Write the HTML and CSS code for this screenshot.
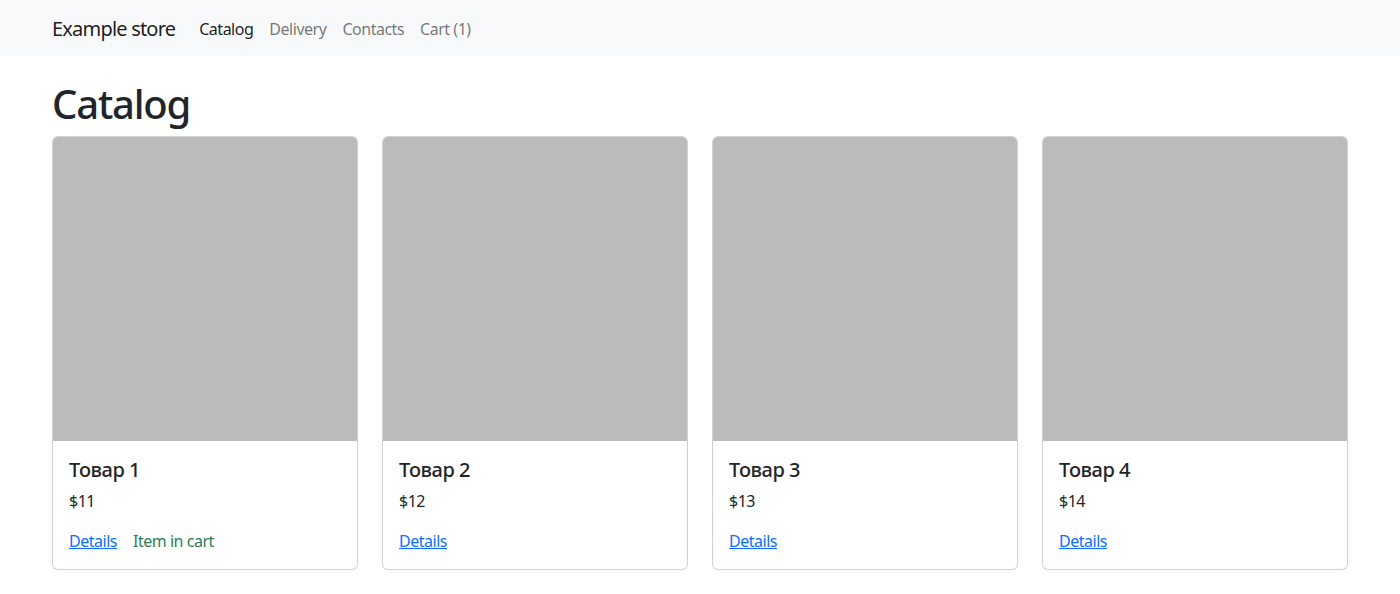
FILE: index.html
```html
<!DOCTYPE html>
<html lang="en">
<head>
<meta charset="utf-8">
<title>Example store</title>
<link rel="stylesheet" href="styles.css">
</head>
<body>
<nav class="navbar">
  <div class="container nav-inner">
    <a class="brand" href="#">Example store</a>
    <ul class="nav">
      <li><a class="nav-link active" href="#">Catalog</a></li>
      <li><a class="nav-link" href="#">Delivery</a></li>
      <li><a class="nav-link" href="#">Contacts</a></li>
      <li><a class="nav-link" href="#">Cart (1)</a></li>
    </ul>
  </div>
</nav>
<main class="container">
  <h1 class="title">Catalog</h1>
  <div class="grid">
    <div class="card">
      <div class="card-img"></div>
      <div class="card-body">
        <h5 class="card-title">Товар 1</h5>
        <p class="price">$11</p>
        <div class="actions"><a href="#" class="link">Details</a><span class="in-cart">Item in cart</span></div>
      </div>
    </div>
    <div class="card">
      <div class="card-img"></div>
      <div class="card-body">
        <h5 class="card-title">Товар 2</h5>
        <p class="price">$12</p>
        <div class="actions"><a href="#" class="link">Details</a></div>
      </div>
    </div>
    <div class="card">
      <div class="card-img"></div>
      <div class="card-body">
        <h5 class="card-title">Товар 3</h5>
        <p class="price">$13</p>
        <div class="actions"><a href="#" class="link">Details</a></div>
      </div>
    </div>
    <div class="card">
      <div class="card-img"></div>
      <div class="card-body">
        <h5 class="card-title">Товар 4</h5>
        <p class="price">$14</p>
        <div class="actions"><a href="#" class="link">Details</a></div>
      </div>
    </div>
  </div>
</main>
</body>
</html>
```

FILE: styles.css
```css
* { box-sizing: border-box; }
body {
  margin: 0;
  font-family: "Noto Sans", "Open Sans", sans-serif;
  font-size: 16px;
  line-height: 1.5;
  letter-spacing: -0.03em;
  color: #212529;
  background: #fff;
}
.container {
  width: 1320px;
  margin: 0 auto;
  padding: 0 12px;
}
.navbar {
  background: #f8f9fa;
  height: 56px;
  display: flex;
  align-items: center;
  padding-top: 2px;
}
.nav-inner {
  display: flex;
  align-items: center;
}
.brand {
  font-size: 20px;
  line-height: 30px;
  letter-spacing: -0.04em;
  color: rgba(0,0,0,.9);
  text-decoration: none;
  margin-right: 16px;
  padding: 5px 0;
}
.nav {
  list-style: none;
  margin: 0;
  padding: 0;
  display: flex;
}
.nav-link {
  display: block;
  padding: 8px;
  color: rgba(0,0,0,.55);
  text-decoration: none;
}
.nav-link.active { color: rgba(0,0,0,.9); }
.title {
  margin: 24px 0 8px;
  font-size: 40px;
  font-weight: 500;
  line-height: 48px;
  letter-spacing: -0.03em;
}
.grid {
  display: grid;
  grid-template-columns: repeat(4, 1fr);
  gap: 24px;
}
.card {
  border: 1px solid rgba(0,0,0,.175);
  border-radius: 6px;
  overflow: hidden;
  background: #fff;
}
.card-img {
  aspect-ratio: 1 / 1;
  background: #bbbbbb;
}
.card-body { padding: 16px; }
.card-title {
  margin: 0 0 8px;
  font-size: 20px;
  font-weight: 500;
  line-height: 24px;
  padding-top: 1px;
  margin-bottom: 7px;
}
.price { margin: 0 0 16px; line-height: 24px; }
.actions { display: flex; line-height: 24px; }
.link { color: #0d6efd; text-decoration: underline; }
.in-cart { margin-left: 16px; color: #2a7d58; }
```
